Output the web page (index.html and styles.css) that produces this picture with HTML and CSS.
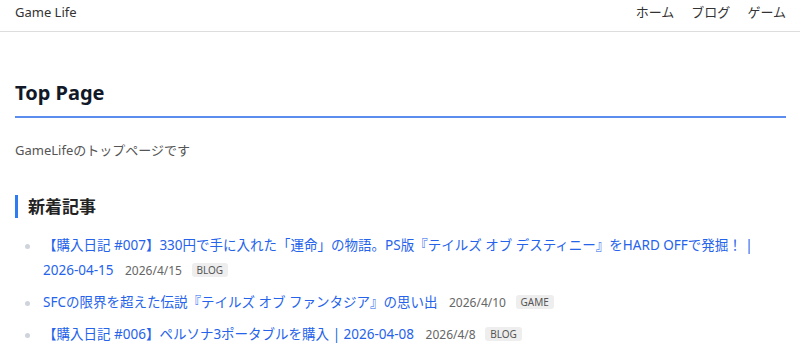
FILE: index.html
```html
<!DOCTYPE html>
<html lang="ja">
<head>
    <meta charset="UTF-8">
    <meta name="viewport" content="width=device-width, initial-scale=1.0">
    <title>Game Life</title>
    <link rel="stylesheet" href="styles.css">
</head>
<body>

    <header class="site-header">
        <a class="logo" href="#">Game Life</a>
        <nav class="nav">
            <a href="#">ホーム</a>
            <a href="#">ブログ</a>
            <a href="#">ゲーム</a>
        </nav>
    </header>

    <main class="container">
        <h1 class="page-title">Top Page</h1>
        <p class="lead">GameLifeのトップページです</p>

        <h2 class="section-title">新着記事</h2>
        <ul class="post-list">
            <li>
                <a href="#">【購入日記 #007】330円で手に入れた「運命」の物語。PS版『テイルズ オブ デスティニー』をHARD OFFで発掘！ | 2026-04-15</a>
                <span class="date">2026/4/15</span>
                <span class="tag">BLOG</span>
            </li>
            <li>
                <a href="#">SFCの限界を超えた伝説『テイルズ オブ ファンタジア』の思い出</a>
                <span class="date">2026/4/10</span>
                <span class="tag">GAME</span>
            </li>
            <li>
                <a href="#">【購入日記 #006】ペルソナ3ポータブルを購入 | 2026-04-08</a>
                <span class="date">2026/4/8</span>
                <span class="tag">BLOG</span>
            </li>
        </ul>
    </main>

</body>
</html>
```

FILE: styles.css
```css
body {
    font-family: "Noto Sans", "Noto Sans CJK JP", sans-serif;
    color: #333;
    background-color: white;
    margin: 0;
}
a {
    text-decoration: none;
}
.site-header {
    display: flex;
    justify-content: space-between;
    align-items: center;
    padding: 2px 14px 9px 15px;
    line-height: 20px;
    border-bottom: 1px solid #ddd;
    font-size: 13px;
}
.logo {
    color: #333;
}
.nav {
    display: flex;
    gap: 17px;
}
.nav a {
    color: #333;
}
.container {
    padding: 0 14px 0 15px;
}
.page-title {
    font-size: 20px;
    color: #111827;
    margin: 47px 0 0;
    padding-bottom: 9px;
    border-bottom: 2px solid #5b8def;
    line-height: 28px;
}
.lead {
    font-size: 13px;
    color: #555;
    margin: 22px 0 0;
    line-height: 20px;
}
.section-title {
    font-size: 17px;
    color: #222;
    margin: 35px 0 0;
    padding-left: 10px;
    border-left: 3px solid #2f7bf0;
    line-height: 23px;
}
.post-list {
    list-style: none;
    margin: 15px 0 0;
    padding: 0 0 0 28px;
}
.post-list li {
    position: relative;
    line-height: 25px;
    margin-bottom: 7px;
    font-size: 13.5px;
}
.post-list li::before {
    content: "";
    position: absolute;
    left: -18px;
    top: 11px;
    width: 5px;
    height: 5px;
    border-radius: 50%;
    background-color: #cfd4dc;
}
.post-list a {
    color: #2563eb;
}
.date {
    font-size: 12px;
    color: #666;
    margin-left: 8px;
}
.tag {
    display: inline-block;
    font-size: 10px;
    line-height: 14px;
    color: #555;
    background-color: #eee;
    border-radius: 3px;
    padding: 0 5px;
    margin-left: 6px;
    vertical-align: 1px;
}
```
